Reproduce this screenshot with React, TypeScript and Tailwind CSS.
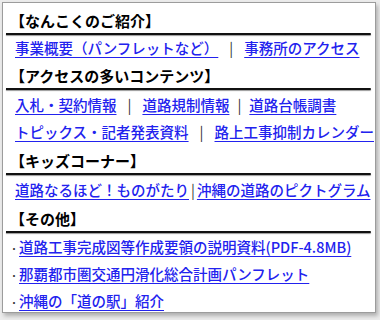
import React from "react";

const F = { fontFamily: '"Noto Sans CJK JP", "Noto Sans", sans-serif' };

function Heading({ children }: { children: React.ReactNode }) {
  return (
    <div>
      <div className="h-[23px] leading-[22px] text-[15px] font-bold text-black pl-[4px]">{children}</div>
      <div className="h-[2px] bg-[#111] mr-[1px] rounded-r-[1px] shadow-[0_1px_1px_#9a9a9a]" />
    </div>
  );
}

function L({ children }: { children: React.ReactNode }) {
  return (
    <a href="#" className="text-[#2222ee] font-medium underline underline-offset-[3px] decoration-[1px]">
      {children}
    </a>
  );
}

function Sep({ tight }: { tight?: boolean }) {
  return <span className={tight ? "text-[#333] mx-[2px]" : "text-[#333] mx-[11px]"}>|</span>;
}

function Dot() {
  return (
    <span className="inline-block w-[8px] ml-[2px] mr-[1px] text-center text-[#333] text-[11px] font-bold">·</span>
  );
}

export default function App() {
  return (
    <div className="w-[380px] h-[320px] bg-[#ececec] pt-[2px] pl-[2px]" style={F}>
      <div className="w-[374px] h-[311px] bg-white border border-[#9c9c9c] shadow-[2px_3px_4px_#b0b0b0] pl-[3px] pr-[3px] pt-[7px] text-[14.5px]">
        <Heading>【なんこくのご紹介】</Heading>
        <div className="pl-[9px] leading-[25px] whitespace-nowrap">
          <L>事業概要（パンフレットなど）</L>
          <Sep />
          <L>事務所のアクセス</L>
        </div>
        <div className="mt-[5px]">
          <Heading>【アクセスの多いコンテンツ】</Heading>
        </div>
        <div className="pl-[9px] leading-[27px] whitespace-nowrap pt-[1px]">
          <div>
            <L>入札・契約情報</L>
            <Sep />
            <L>道路規制情報</L>
            <span className="text-[#333] mx-[8px]">|</span>
            <L>道路台帳調書</L>
          </div>
          <div>
            <L>トピックス・記者発表資料</L>
            <Sep />
            <L>路上工事抑制カレンダー</L>
          </div>
        </div>
        <div className="mt-[5px]">
          <Heading>【キッズコーナー】</Heading>
        </div>
        <div className="pl-[9px] leading-[27px] whitespace-nowrap pt-[1px]">
          <L>道路なるほど！ものがたり</L>
          <Sep tight />
          <L>沖縄の道路のピクトグラム</L>
        </div>
        <div className="mt-[5px]">
          <Heading>【その他】</Heading>
        </div>
        <div className="pl-[2px] leading-[26px] whitespace-nowrap pt-[1px]">
          <div>
            <Dot />
            <L>道路工事完成図等作成要領の説明資料(PDF-4.8MB)</L>
          </div>
          <div>
            <Dot />
            <L>那覇都市圏交通円滑化総合計画パンフレット</L>
          </div>
          <div>
            <Dot />
            <L>沖縄の「道の駅」紹介</L>
          </div>
        </div>
      </div>
    </div>
  );
}
